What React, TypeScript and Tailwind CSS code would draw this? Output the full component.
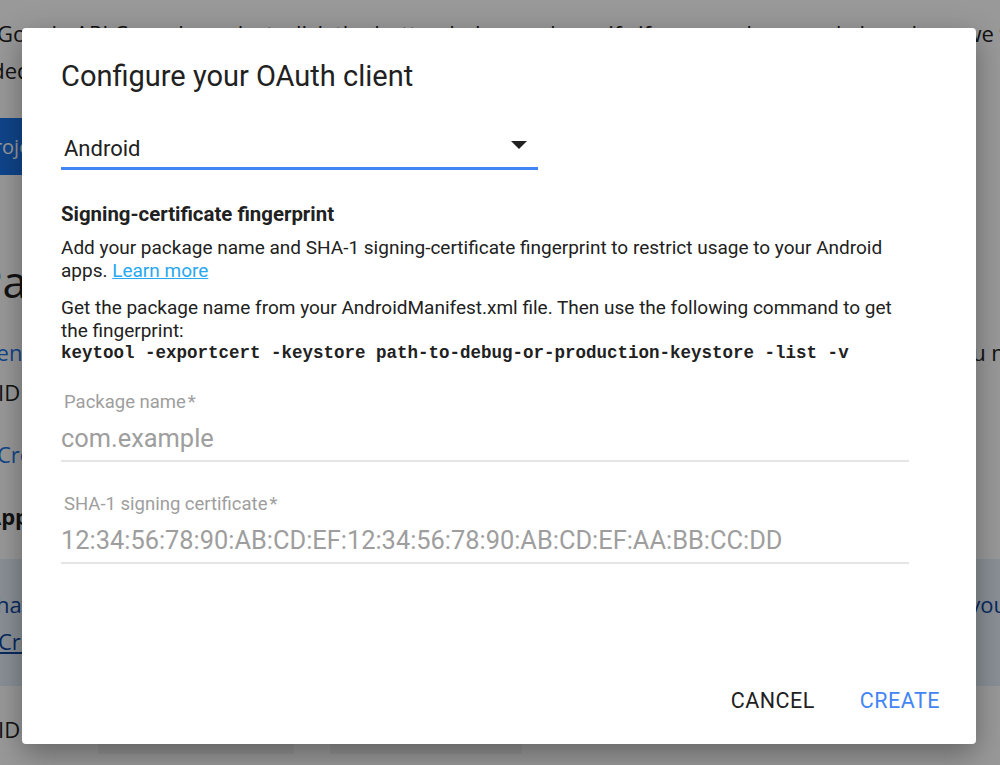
import React from 'react';

const BackgroundPage: React.FC = () => (
  <div className="w-[1000px] h-[765px] overflow-hidden bg-white font-['Open_Sans',sans-serif] text-[#212121]">
    <div className="pt-[15px] flex flex-col">
      <p className="-ml-[3px] whitespace-nowrap text-[22px] leading-[37px]">
        Google API Console project, click the button below and specify if you need one and also where we will
      </p>
      <p className="-ml-[47px] whitespace-nowrap text-[22px] leading-[37px]">
        needed project information in the form below and so when you need more info for
      </p>
      <div className="mt-[29px] -ml-[118px] h-[57px] w-[250px] bg-[#1a73e8] text-white text-[20px] flex items-center pl-[33px]">
        Create project
      </div>
      <p className="mt-[80px] -ml-[24px] whitespace-nowrap text-[44px] leading-[52px]">Package</p>
      <div className="mt-[30px] -ml-[34px] w-[1077px] flex justify-between whitespace-nowrap text-[22px] leading-[30px]">
        <span className="text-[#1a73e8]">Open</span>
        <span>you need</span>
      </div>
      <p className="mt-[10px] -ml-[2px] whitespace-nowrap text-[22px] leading-[30px]">ID</p>
      <p className="mt-[32px] -ml-[3px] whitespace-nowrap text-[22px] leading-[30px] text-[#1a73e8]">Create</p>
      <p className="mt-[32px] -ml-[14px] whitespace-nowrap text-[22px] leading-[30px] font-bold">Apps</p>
      <div className="mt-[28px] h-[127px] bg-[#e6f0fb] flex flex-col pt-[30px]">
        <div className="-ml-[4px] w-[1011px] flex justify-between whitespace-nowrap text-[22px] leading-[30px] text-[#0d47a1]">
          <span>have</span>
          <span>you</span>
        </div>
        <p className="mt-[7px] -ml-[2px] whitespace-nowrap text-[22px] leading-[30px] text-[#0d47a1] underline">Create</p>
      </div>
      <p className="mt-[28px] -ml-[2px] whitespace-nowrap text-[22px] leading-[30px]">ID</p>
      <div className="flex gap-[36px] pl-[98px]">
        <div className="h-[10px] w-[196px] bg-[#f4f4f4]" />
        <div className="h-[10px] w-[192px] bg-[#f4f4f4]" />
      </div>
    </div>
  </div>
);

const Field: React.FC<{ label: string; value: string }> = ({ label, value }) => (
  <div className="flex flex-col">
    <label className="pl-[3px] text-[18.5px] leading-[22px] text-[#9e9e9e]">
      {label}
      <span className="ml-[2px]">*</span>
    </label>
    <div className="mt-[10px] text-[25.4px] leading-[30px] text-[#9e9e9e] pb-[7px] border-b-2 border-[#e5e5e5]">
      {value}
    </div>
  </div>
);

export default function App() {
  return (
    <div className="relative w-[1000px] h-[765px] overflow-hidden">
      <BackgroundPage />
      <div className="absolute inset-0 bg-black/40" />
      <div className="absolute left-[22px] top-[28px] w-[954px] h-[716px] bg-white rounded-[4px] shadow-[0_10px_30px_rgba(0,0,0,0.35)] font-['Roboto',sans-serif] text-[#212121] flex flex-col">
        <div className="pl-[39px] pr-[67px] pt-[30px] flex flex-col flex-1">
          <h2 className="text-[29px] leading-[36px] font-normal text-[#212121]">Configure your OAuth client</h2>

          <div className="mt-[36px] w-[477px] flex items-center justify-between pl-[3px] pr-[11px] h-[40px] border-b-[3px] border-[#4285f4]">
            <span className="text-[22px] leading-[28px]">Android</span>
            <svg width="16" height="8" viewBox="0 0 16 8" className="mb-[8px]">
              <path d="M0 0 L16 0 L8 8 Z" fill="#212121" />
            </svg>
          </div>

          <h3 className="mt-[32px] text-[20.4px] leading-[24px] font-bold">Signing-certificate fingerprint</h3>
          <p className="mt-[10px] text-[19px] leading-[23px]">
            Add your package name and SHA-1 signing-certificate fingerprint to restrict usage to your Android apps.{' '}
            <a className="text-[#29a8f0] underline">Learn more</a>
          </p>
          <p className="mt-[14px] text-[19px] leading-[23px]">
            Get the package name from your AndroidManifest.xml file. Then use the following command to get the
            fingerprint:
          </p>
          <code className="font-['Liberation_Mono',monospace] font-bold text-[17.5px] leading-[23px] whitespace-nowrap">
            keytool -exportcert -keystore path-to-debug-or-production-keystore -list -v
          </code>

          <div className="mt-[26px] flex flex-col gap-[31px]">
            <Field label="Package name" value="com.example" />
            <Field label="SHA-1 signing certificate" value="12:34:56:78:90:AB:CD:EF:12:34:56:78:90:AB:CD:EF:AA:BB:CC:DD" />
          </div>
        </div>

        <div className="flex justify-end gap-[45px] pr-[36px] pb-[30px]">
          <button className="text-[21.5px] leading-[26px] tracking-[0.5px] text-[#212121]">CANCEL</button>
          <button className="text-[21.5px] leading-[26px] tracking-[0.5px] text-[#4285f4]">CREATE</button>
        </div>
      </div>
    </div>
  );
}
